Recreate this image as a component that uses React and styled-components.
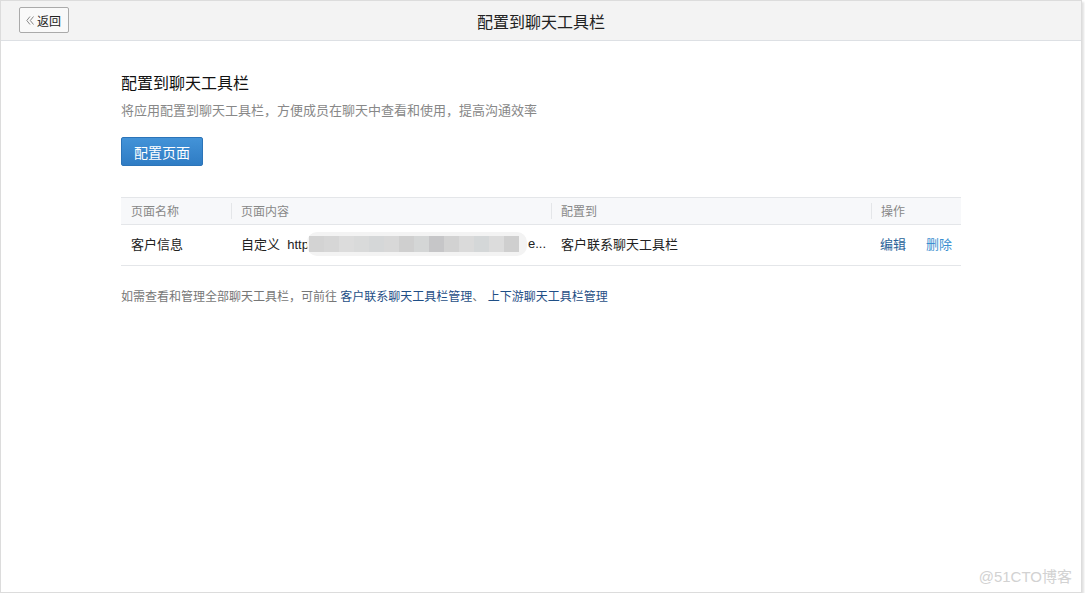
import React from 'react';
import styled, { createGlobalStyle } from 'styled-components';

const GlobalStyle = createGlobalStyle`
  html, body {
    margin: 0;
    padding: 0;
    background: #fff;
    font-family: "Liberation Sans", "Noto Sans CJK SC", sans-serif;
  }
`;

const Frame = styled.div`
  position: relative;
  width: 1080px;
  height: 591px;
  border: 1px solid #dcdcdc;
  box-shadow: 2px 2px 2px #e2e2e2;
  background: #fff;
  overflow: hidden;
`;

const TopBar = styled.header`
  height: 39px;
  background: #f3f3f3;
  border-bottom: 1px solid #dde0e4;
  display: flex;
  align-items: center;
  justify-content: center;
  position: relative;
`;

const BackButton = styled.button`
  position: absolute;
  left: 18px;
  top: 6px;
  height: 26px;
  width: 50px;
  padding: 0 0 0 6px;
  border: 1px solid #aaa;
  border-radius: 2px;
  background: #f9f9f9;
  font-family: inherit;
  font-size: 12px;
  color: #222;
  display: flex;
  align-items: center;
  gap: 3px;
`;

const TopTitle = styled.h1`
  margin: 0;
  font-size: 16px;
  font-weight: normal;
  color: #222;
`;

const Content = styled.main`
  width: 840px;
  margin: 0 auto;
  padding-top: 31px;
`;

const Title = styled.h2`
  margin: 0;
  font-size: 16px;
  line-height: 24px;
  font-weight: normal;
  color: #111;
`;

const Desc = styled.p`
  margin: 5px 0 0;
  font-size: 13px;
  line-height: 20px;
  color: #888;
`;

const PrimaryButton = styled.button`
  margin-top: 16px;
  width: 82px;
  height: 29px;
  border: 1px solid #2c74b8;
  border-radius: 2px;
  background: linear-gradient(#4393d8, #2f7cc4);
  color: #fff;
  font-family: inherit;
  font-size: 14px;
  padding: 0;
`;

const Table = styled.div`
  margin-top: 31px;
  display: grid;
  grid-template-columns: 110px 320px 320px 90px;
  border-top: 1px solid #e4e6e9;
`;

const HeadCell = styled.div`
  position: relative;
  height: 25px;
  display: flex;
  align-items: center;
  padding-left: 10px;
  padding-bottom: 1px;
  background: #f7f8fa;
  border-bottom: 1px solid #e4e6e9;
  font-size: 12px;
  color: #888;

  ${p => p.$divider && `
    &::before {
      content: "";
      position: absolute;
      left: 0;
      top: 5px;
      bottom: 5px;
      width: 1px;
      background: #e4e6e9;
    }
  `}
`;

const Cell = styled.div`
  height: 37px;
  padding-bottom: 3px;
  display: flex;
  align-items: center;
  padding-left: 10px;
  border-bottom: 1px solid #e4e6e9;
  font-size: 13px;
  color: #222;
  white-space: nowrap;
  overflow: hidden;
`;

const Ops = styled(Cell)`
  padding-left: 9px;
  gap: 20px;
`;

const OpLink = styled.a`
  color: ${p => p.$light ? '#3a8fd0' : '#2a6299'};
  text-decoration: none;
  cursor: pointer;
`;

const Masked = styled.span`
  display: inline-flex;
  height: 24px;
  margin: 0 1px 0 -2px;
  border-radius: 10px;
  overflow: hidden;
  background: #f3f3f3;
  align-items: center;
  padding: 0 8px 0 2px;
  filter: blur(0.4px);
`;

const Tile = styled.span`
  width: 15px;
  height: 16px;
  background: ${p => p.$c};
`;

const Foot = styled.p`
  margin: 21px 0 0;
  font-size: 12px;
  color: #777;
`;

const FootLink = styled.a`
  color: #1f4f86;
  text-decoration: none;
`;

const Watermark = styled.div`
  position: absolute;
  right: 9px;
  bottom: 6px;
  font-size: 15px;
  color: #d2d2d2;
`;

const tiles = ['#d3d3d3', '#d6d6d6', '#dcdcdc', '#d9dada', '#d5d7d8', '#d8d8d8', '#cfcfcf', '#d4d6d6', '#c6c6c8', '#d2d2d2', '#dadada', '#d4d7d8', '#dcdcdc', '#cfcfcf'];

function DoubleLeft() {
  return (
    <svg width="8" height="9" viewBox="0 0 8 9" fill="none" stroke="#888" strokeWidth="1">
      <path d="M4 0.5 L0.8 4.5 L4 8.5" />
      <path d="M7.5 0.5 L4.3 4.5 L7.5 8.5" />
    </svg>
  );
}

export default function App() {
  return (
    <>
      <GlobalStyle />
      <Frame>
        <TopBar>
          <BackButton><DoubleLeft />返回</BackButton>
          <TopTitle>配置到聊天工具栏</TopTitle>
        </TopBar>
        <Content>
          <Title>配置到聊天工具栏</Title>
          <Desc>将应用配置到聊天工具栏，方便成员在聊天中查看和使用，提高沟通效率</Desc>
          <PrimaryButton>配置页面</PrimaryButton>

          <Table>
            <HeadCell>页面名称</HeadCell>
            <HeadCell $divider>页面内容</HeadCell>
            <HeadCell $divider>配置到</HeadCell>
            <HeadCell $divider>操作</HeadCell>

            <Cell>客户信息</Cell>
            <Cell>
              自定义&nbsp;&nbsp;http
              <Masked>
                {tiles.map((c, i) => <Tile key={i} $c={c} />)}
              </Masked>
              e...
            </Cell>
            <Cell>客户联系聊天工具栏</Cell>
            <Ops>
              <OpLink>编辑</OpLink>
              <OpLink $light>删除</OpLink>
            </Ops>
          </Table>

          <Foot>
            如需查看和管理全部聊天工具栏，可前往 <FootLink>客户联系聊天工具栏管理</FootLink>、 <FootLink>上下游聊天工具栏管理</FootLink>
          </Foot>
        </Content>
        <Watermark>@51CTO博客</Watermark>
      </Frame>
    </>
  );
}
